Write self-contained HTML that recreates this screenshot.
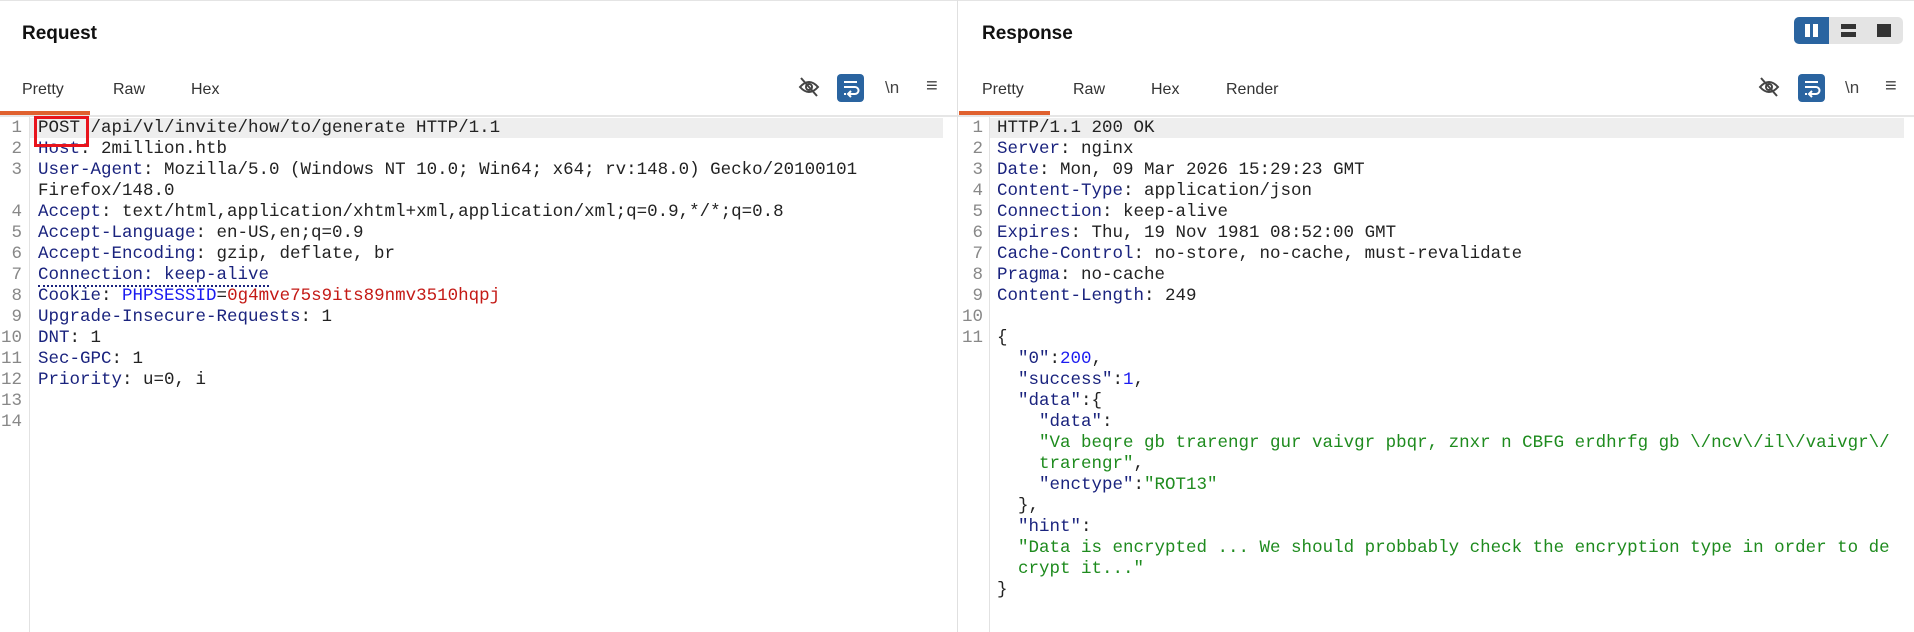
<!DOCTYPE html>
<html><head><meta charset="utf-8"><style>
*{margin:0;padding:0;box-sizing:border-box}
body{width:1914px;height:632px;background:#fff;position:relative;overflow:hidden;font-family:"Liberation Sans",sans-serif}
.abs{position:absolute}
.title{font-weight:bold;font-size:19px;color:#111;top:23px}
.tab{font-size:16px;color:#333;top:81px}
.ul{background:#e0612f;height:4px;top:111px}
.sep{background:#e6e6e6;height:2px;top:115px}
.code{font-family:"Liberation Mono",monospace;font-size:17.5px;line-height:21px;white-space:pre;color:#222;top:118px}
.nums{font-family:"Liberation Mono",monospace;font-size:17.5px;line-height:21px;white-space:pre;color:#888;text-align:right;top:118px}
.k{color:#1a237e}.r{color:#c41a16}.g{color:#1e8b1e}.b{color:#1c1cf0}
.hl{background:#eeeeee;height:20px;top:118px}
.gut{width:1px;background:#e2e2e2;top:117px;bottom:0}
</style></head><body>
<div class="abs" style="left:0;top:0;width:1914px;height:1px;background:#e4e4e4"></div>
<div class="abs" style="left:957px;top:0;width:1px;height:632px;background:#e0e0e0"></div>

<!-- Left pane -->
<div class="abs title" style="left:22px">Request</div>
<div class="abs tab" style="left:22px">Pretty</div>
<div class="abs tab" style="left:113px">Raw</div>
<div class="abs tab" style="left:191px">Hex</div>
<div class="abs sep" style="left:0;width:957px"></div>
<div class="abs ul" style="left:0;width:90px"></div>

<div class="abs hl" style="left:30px;width:913px"></div>
<div class="abs gut" style="left:29px"></div>
<div class="abs nums" style="left:0;width:22px">1
2
3

4
5
6
7
8
9
10
11
12
13
14</div>
<div class="abs code" style="left:38px">POST /api/vl/invite/how/to/generate HTTP/1.1
<span class="k">Host</span>: 2million.htb
<span class="k">User-Agent</span>: Mozilla/5.0 (Windows NT 10.0; Win64; x64; rv:148.0) Gecko/20100101
Firefox/148.0
<span class="k">Accept</span>: text/html,application/xhtml+xml,application/xml;q=0.9,*/*;q=0.8
<span class="k">Accept-Language</span>: en-US,en;q=0.9
<span class="k">Accept-Encoding</span>: gzip, deflate, br
<span class="k" style="border-bottom:2px dotted #1a237e">Connection: keep-alive</span>
<span class="k">Cookie</span>: <span class="b">PHPSESSID</span>=<span class="r">0g4mve75s9its89nmv3510hqpj</span>
<span class="k">Upgrade-Insecure-Requests</span>: 1
<span class="k">DNT</span>: 1
<span class="k">Sec-GPC</span>: 1
<span class="k">Priority</span>: u=0, i</div>
<div class="abs" style="left:34px;top:116px;width:55px;height:31px;border:3px solid #e8141c"></div>

<!-- left icons -->
<svg class="abs" style="left:798px;top:77px" width="22" height="20" viewBox="0 0 22 20"><path d="M2 10 Q11 0 20 10 Q11 20 2 10Z" fill="none" stroke="#444" stroke-width="2"/><circle cx="11" cy="10" r="3" fill="none" stroke="#444" stroke-width="2"/><line x1="3" y1="1" x2="19" y2="19" stroke="#444" stroke-width="2"/></svg>
<div class="abs" style="left:837px;top:74px;width:27px;height:28px;background:#2a64a0;border-radius:4px"></div>
<svg class="abs" style="left:837px;top:74px" width="27" height="28" viewBox="0 0 27 28"><path d="M7 8H20M7 13H18a3.5 3.5 0 0 1 0 7H12M14 17l-3 3 3 3M7 20H9" fill="none" stroke="#fff" stroke-width="2"/></svg>
<div class="abs" style="left:885px;top:78px;font-size:17px;color:#444">\n</div>
<div class="abs" style="left:926px;top:75px;font-size:20px;color:#444">≡</div>

<!-- Right pane -->
<div class="abs title" style="left:982px">Response</div>
<div class="abs" style="left:1794px;top:17px;width:109px;height:27px;background:#e4e4e4;border-radius:5px"></div>
<div class="abs" style="left:1794px;top:17px;width:35px;height:27px;background:#2a64a0;border-radius:5px 0 0 5px"></div>
<div class="abs" style="left:1805px;top:24px;width:5px;height:13px;background:#fff"></div>
<div class="abs" style="left:1813px;top:24px;width:5px;height:13px;background:#fff"></div>
<div class="abs" style="left:1841px;top:24px;width:15px;height:5px;background:#333"></div>
<div class="abs" style="left:1841px;top:32px;width:15px;height:5px;background:#333"></div>
<div class="abs" style="left:1877px;top:24px;width:14px;height:13px;background:#333"></div>

<div class="abs tab" style="left:982px">Pretty</div>
<div class="abs tab" style="left:1073px">Raw</div>
<div class="abs tab" style="left:1151px">Hex</div>
<div class="abs tab" style="left:1226px">Render</div>
<div class="abs sep" style="left:958px;width:956px"></div>
<div class="abs ul" style="left:959px;width:91px"></div>

<div class="abs hl" style="left:990px;width:914px"></div>
<div class="abs gut" style="left:989px"></div>
<div class="abs nums" style="left:958px;width:25px">1
2
3
4
5
6
7
8
9
10
11</div>
<div class="abs code" style="left:997px">HTTP/1.1 200 OK
<span class="k">Server</span>: nginx
<span class="k">Date</span>: Mon, 09 Mar 2026 15:29:23 GMT
<span class="k">Content-Type</span>: application/json
<span class="k">Connection</span>: keep-alive
<span class="k">Expires</span>: Thu, 19 Nov 1981 08:52:00 GMT
<span class="k">Cache-Control</span>: no-store, no-cache, must-revalidate
<span class="k">Pragma</span>: no-cache
<span class="k">Content-Length</span>: 249

{
  <span class="k">"0"</span>:<span class="b">200</span>,
  <span class="k">"success"</span>:<span class="b">1</span>,
  <span class="k">"data"</span>:{
    <span class="k">"data"</span>:
    <span class="g">"Va beqre gb trarengr gur vaivgr pbqr, znxr n CBFG erdhrfg gb \/ncv\/il\/vaivgr\/</span>
    <span class="g">trarengr"</span>,
    <span class="k">"enctype"</span>:<span class="g">"ROT13"</span>
  },
  <span class="k">"hint"</span>:
  <span class="g">"Data is encrypted ... We should probbably check the encryption type in order to de</span>
  <span class="g">crypt it..."</span>
}</div>

<!-- right icons -->
<svg class="abs" style="left:1758px;top:77px" width="22" height="20" viewBox="0 0 22 20"><path d="M2 10 Q11 0 20 10 Q11 20 2 10Z" fill="none" stroke="#444" stroke-width="2"/><circle cx="11" cy="10" r="3" fill="none" stroke="#444" stroke-width="2"/><line x1="3" y1="1" x2="19" y2="19" stroke="#444" stroke-width="2"/></svg>
<div class="abs" style="left:1798px;top:74px;width:27px;height:28px;background:#2a64a0;border-radius:4px"></div>
<svg class="abs" style="left:1798px;top:74px" width="27" height="28" viewBox="0 0 27 28"><path d="M7 8H20M7 13H18a3.5 3.5 0 0 1 0 7H12M14 17l-3 3 3 3M7 20H9" fill="none" stroke="#fff" stroke-width="2"/></svg>
<div class="abs" style="left:1845px;top:78px;font-size:17px;color:#444">\n</div>
<div class="abs" style="left:1885px;top:75px;font-size:20px;color:#444">≡</div>
</body></html>
